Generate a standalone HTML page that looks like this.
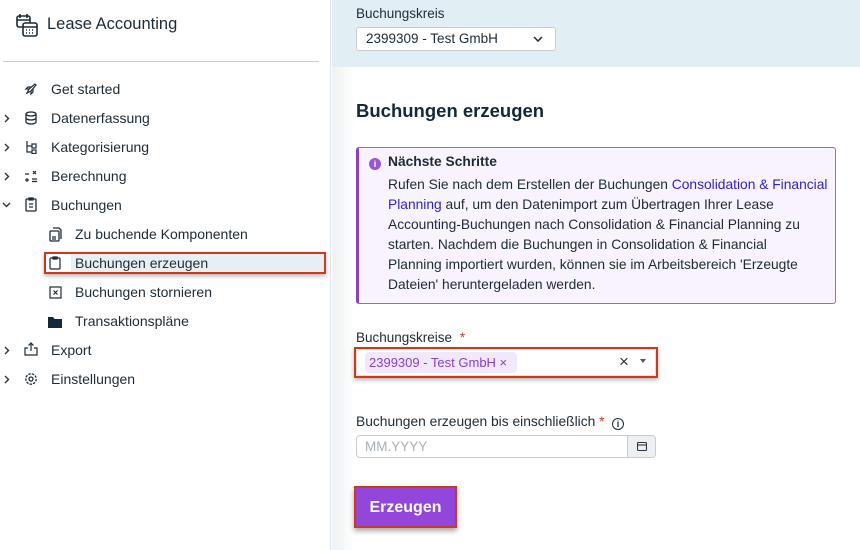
<!DOCTYPE html>
<html><head><meta charset="utf-8"><style>
*{margin:0;padding:0;box-sizing:border-box}
body{width:860px;height:550px;overflow:hidden;font-family:"Liberation Sans",sans-serif;color:#1d2b36;background:#fff;position:relative}
.a{position:absolute}
.side{left:0;top:0;width:331px;height:550px;background:#fff;border-right:1px solid #dde3e8}
.nav{font-size:14px;color:#1d2b36;white-space:nowrap}
svg{display:block}
.hdr{left:332px;top:0;width:528px;height:67px;background:#e1eff4}
.main{left:332px;top:67px;width:528px;height:483px;background:linear-gradient(90deg,#eef0f2 0,#fff 22px)}
</style></head><body>
<div class="a side">
 <svg class="a" style="left:16px;top:13px" width="22" height="24" viewBox="0 0 22 24" fill="none" stroke="#1d2b36" stroke-width="1.6"><rect x="1" y="3" width="13" height="11" rx="2"/><path d="M4 1v4M11 1v4M1 7h13"/><rect x="7" y="10" width="14" height="13" rx="2" fill="#fff"/><path d="M7 14h14M10 17h1M13 17h1M16 17h1M10 20h1M13 20h1M16 20h1"/></svg>
 <div class="a" style="left:47px;top:15px;font-size:16.5px">Lease Accounting</div>
 <div class="a" style="left:3px;top:61px;width:316px;height:1px;background:#c9d0d6"></div>

 <svg class="a" style="left:24px;top:82px" width="14" height="14" viewBox="0 0 14 14" fill="none" stroke="#1d2b36" stroke-width="1.2"><path d="M3 11l2-4 6-5 1 1-5 6-4 2zM5 7L2 7l2-2h3M7 9v3l2-2V7"/></svg>
 <div class="a nav" style="left:51px;top:81px">Get started</div>

 <svg class="a" style="left:4px;top:114px" width="6" height="9" viewBox="0 0 6 9" fill="none" stroke="#333" stroke-width="1.4"><path d="M1 1l3.5 3.5L1 8"/></svg>
 <svg class="a" style="left:24px;top:111px" width="14" height="14" viewBox="0 0 14 14" fill="none" stroke="#1d2b36" stroke-width="1.3"><ellipse cx="7" cy="3" rx="5" ry="2"/><path d="M2 3v8c0 1 2.2 2 5 2s5-1 5-2V3M2 7c0 1 2.2 2 5 2s5-1 5-2"/></svg>
 <div class="a nav" style="left:51px;top:110px">Datenerfassung</div>

 <svg class="a" style="left:4px;top:143px" width="6" height="9" viewBox="0 0 6 9" fill="none" stroke="#333" stroke-width="1.4"><path d="M1 1l3.5 3.5L1 8"/></svg>
 <svg class="a" style="left:24px;top:140px" width="14" height="14" viewBox="0 0 14 14" fill="none" stroke="#1d2b36" stroke-width="1.2"><path d="M3 1v11h5M3 6h5"/><rect x="8" y="4" width="4" height="4"/><rect x="8" y="10" width="4" height="3.5"/></svg>
 <div class="a nav" style="left:51px;top:139px">Kategorisierung</div>

 <svg class="a" style="left:4px;top:172px" width="6" height="9" viewBox="0 0 6 9" fill="none" stroke="#333" stroke-width="1.4"><path d="M1 1l3.5 3.5L1 8"/></svg>
 <svg class="a" style="left:24px;top:170px" width="14" height="13" viewBox="0 0 14 13" fill="none" stroke="#1d2b36" stroke-width="1.2"><path d="M1 4h4M9 1l3 3M12 1L9 4M1 10h4M3 8v4M8 9h5M8 11.5h5"/></svg>
 <div class="a nav" style="left:51px;top:168px">Berechnung</div>

 <svg class="a" style="left:2px;top:202px" width="9" height="6" viewBox="0 0 9 6" fill="none" stroke="#333" stroke-width="1.4"><path d="M1 1l3.5 3.5L8 1"/></svg>
 <svg class="a" style="left:25px;top:197px" width="12" height="15" viewBox="0 0 12 15" fill="none" stroke="#1d2b36" stroke-width="1.3"><rect x="1" y="2" width="10" height="12" rx="1"/><path d="M4 1h4v2H4zM4 7h4M4 10h4"/></svg>
 <div class="a nav" style="left:51px;top:197px">Buchungen</div>

 <svg class="a" style="left:49px;top:227px" width="13" height="15" viewBox="0 0 13 15" fill="none" stroke="#1d2b36" stroke-width="1.3"><path d="M4 1h6l2 2v9"/><rect x="1" y="4" width="9" height="10" rx="1"/><path d="M3 10h4M3 12h4"/></svg>
 <div class="a nav" style="left:75px;top:226px">Zu buchende Komponenten</div>

 <div class="a" style="left:44px;top:252px;width:282px;height:22px;border:2px solid #d0381c;box-shadow:0 2px 4px rgba(0,0,0,.3)"></div>
 <div class="a" style="left:71px;top:254px;width:253px;height:18px;background:#e8eff2"></div>
 <svg class="a" style="left:49px;top:256px" width="12" height="14" viewBox="0 0 12 14" fill="none" stroke="#1d2b36" stroke-width="1.2"><rect x="1" y="2" width="10" height="11" rx="1"/><path d="M4 1h4v2H4z"/></svg>
 <div class="a nav" style="left:75px;top:255px">Buchungen erzeugen</div>

 <svg class="a" style="left:49px;top:286px" width="13" height="13" viewBox="0 0 13 13" fill="none" stroke="#1d2b36" stroke-width="1.2"><rect x="1" y="1" width="11" height="11"/><path d="M4.5 4.5l4 4M8.5 4.5l-4 4"/></svg>
 <div class="a nav" style="left:75px;top:284px">Buchungen stornieren</div>

 <svg class="a" style="left:48px;top:316px" width="14" height="12" viewBox="0 0 14 12"><path d="M0 1h5l1.5 2H14v9H0z" fill="#102a3a"/></svg>
 <div class="a nav" style="left:75px;top:313px">Transaktionspläne</div>

 <svg class="a" style="left:4px;top:346px" width="6" height="9" viewBox="0 0 6 9" fill="none" stroke="#333" stroke-width="1.4"><path d="M1 1l3.5 3.5L1 8"/></svg>
 <svg class="a" style="left:24px;top:342px" width="14" height="14" viewBox="0 0 14 14" fill="none" stroke="#1d2b36" stroke-width="1.2"><path d="M4 6H1v7h12V6h-3M7 9V1M4.5 3.5L7 1l2.5 2.5"/></svg>
 <div class="a nav" style="left:51px;top:342px">Export</div>

 <svg class="a" style="left:4px;top:375px" width="6" height="9" viewBox="0 0 6 9" fill="none" stroke="#333" stroke-width="1.4"><path d="M1 1l3.5 3.5L1 8"/></svg>
 <svg class="a" style="left:24px;top:372px" width="14" height="14" viewBox="0 0 14 14" fill="none" stroke="#1d2b36" stroke-width="1.3"><circle cx="7" cy="7" r="2"/><circle cx="7" cy="7" r="5.2" stroke-dasharray="2.4 1.2"/></svg>
 <div class="a nav" style="left:51px;top:371px">Einstellungen</div>
</div>

<div class="a hdr">
 <div class="a" style="left:24px;top:6px;font-size:13.5px">Buchungskreis</div>
 <div class="a" style="left:24px;top:27px;width:200px;height:24px;background:#fff;border:1px solid #c5ccd2;border-radius:3px;font-size:13.5px;padding:3px 0 0 9px">2399309 - Test GmbH<svg class="a" style="left:176px;top:8px" width="10" height="6" viewBox="0 0 10 6" fill="none" stroke="#1d2b36" stroke-width="1.5"><path d="M1 1l4 4 4-4"/></svg></div>
</div>

<div class="a main">
 <div class="a" style="left:24px;top:33px;font-size:18.5px;font-weight:bold;color:#12293a">Buchungen erzeugen</div>
 <div class="a" style="left:24px;top:80px;width:480px;height:157px;background:#f8f3fd;border:1px solid #a45ee0;border-left:3px solid #8a3fd3;border-radius:3px"></div>
 <div class="a" style="left:37px;top:91px;width:12px;height:12px;border-radius:50%;background:#9b55d8;color:#fff;font-size:9px;font-weight:bold;text-align:center;line-height:12px">i</div>
 <div class="a" style="left:56px;top:87px;font-size:13.8px;font-weight:bold">Nächste Schritte</div>
 <div class="a" style="left:56px;top:108px;font-size:13.8px;line-height:20px;white-space:nowrap">Rufen Sie nach dem Erstellen der Buchungen <span style="color:#2b1fe0">Consolidation &amp; Financial<br>Planning</span> auf, um den Datenimport zum Übertragen Ihrer Lease<br>Accounting-Buchungen nach Consolidation &amp; Financial Planning zu<br>starten. Nachdem die Buchungen in Consolidation &amp; Financial<br>Planning importiert wurden, können sie im Arbeitsbereich 'Erzeugte<br>Dateien' heruntergeladen werden.</div>

 <div class="a" style="left:24px;top:263px;font-size:13.5px">Buchungskreise <span style="color:#d0381c;margin-left:4px">*</span></div>
 <div class="a" style="left:22px;top:280px;width:304px;height:31px;border:2px solid #d0381c;box-shadow:0 2px 4px rgba(0,0,0,.3)"></div>
 <div class="a" style="left:24px;top:282px;width:300px;height:27px;border:1px solid #dde1e5;border-radius:3px;background:#fff"></div>
 <div class="a" style="left:33px;top:285px;width:152px;height:21px;background:#f1e8fb;border-radius:4px;color:#8a3fd3;font-size:13px;padding:3px 0 0 4px">2399309 - Test GmbH ×</div>
 <div class="a" style="left:287px;top:285px;font-size:17px;color:#333">×</div>
 <div class="a" style="left:308px;top:292px;width:0;height:0;border-left:3px solid transparent;border-right:3px solid transparent;border-top:4px solid #555"></div>

 <div class="a" style="left:24px;top:347px;font-size:13.8px">Buchungen erzeugen bis einschließlich <span style="color:#d0381c">*</span></div>
 <div class="a" style="left:280px;top:351px;width:12px;height:12px;border:1.3px solid #1d2b36;border-radius:50%;font-size:9px;text-align:center;line-height:10px;font-weight:bold">i</div>
 <div class="a" style="left:24px;top:368px;width:300px;height:23px;border:1px solid #c5ccd2;border-radius:4px;background:#fff;font-size:13.5px;color:#a8b0b7;padding:3px 0 0 8px">MM.YYYY</div>
 <div class="a" style="left:295px;top:369px;width:28px;height:21px;background:#edf0f2;border-left:1px solid #c5ccd2;border-radius:0 3px 3px 0"><svg class="a" style="left:9px;top:6px" width="10" height="9" viewBox="0 0 10 9" fill="none" stroke="#333" stroke-width="1.1"><rect x=".5" y=".5" width="9" height="8" rx="1"/><path d="M.5 3h9"/></svg></div>

 <div class="a" style="left:22px;top:419px;width:103px;height:42px;border:2px solid #d0381c;box-shadow:0 3px 5px rgba(0,0,0,.35)"></div>
 <div class="a" style="left:24px;top:421px;width:99px;height:38px;background:#9346da;color:#fff;font-weight:bold;font-size:16px;text-align:center;line-height:40px">Erzeugen</div>
</div>
</body></html>
